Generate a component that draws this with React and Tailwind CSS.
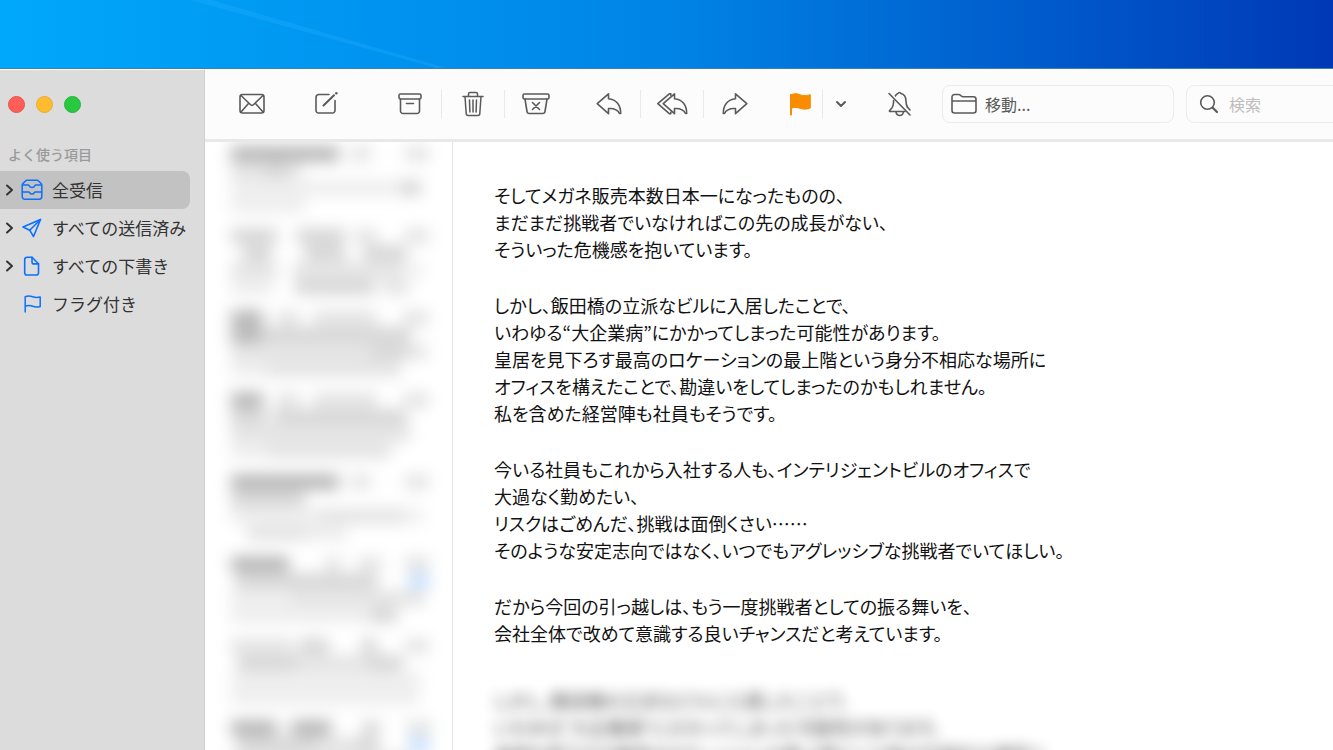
const FAVORITES = [
  { label: '全受信', icon: InboxIcon, expandable: true, active: true },
  { label: 'すべての送信済み', icon: SentIcon, expandable: true },
  { label: 'すべての下書き', icon: DraftIcon, expandable: true },
  { label: 'フラグ付き', icon: FlagOutlineIcon },
];

const PARAGRAPHS = [
  [
    'そしてメガネ販売本数日本一になったものの、',
    'まだまだ挑戦者でいなければこの先の成長がない、',
    'そういった危機感を抱いています。',
  ],
  [
    'しかし、飯田橋の立派なビルに入居したことで、',
    'いわゆる“大企業病”にかかってしまった可能性があります。',
    '皇居を見下ろす最高のロケーションの最上階という身分不相応な場所に',
    'オフィスを構えたことで、勘違いをしてしまったのかもしれません。',
    '私を含めた経営陣も社員もそうです。',
  ],
  [
    '今いる社員もこれから入社する人も、インテリジェントビルのオフィスで',
    '大過なく勤めたい、',
    'リスクはごめんだ、挑戦は面倒くさい……',
    'そのような安定志向ではなく、いつでもアグレッシブな挑戦者でいてほしい。',
  ],
  [
    'だから今回の引っ越しは、もう一度挑戦者としての振る舞いを、',
    '会社全体で改めて意識する良いチャンスだと考えています。',
  ],
];

const TONES = {
  none: 'bg-transparent',
  faint: 'bg-black/8',
  light: 'bg-black/12',
  mid: 'bg-black/18',
  dark: 'bg-black/32',
  blue: 'bg-blue-200',
};

// each message is four lines, each line a run of [tone, width]
const MESSAGES = [
  [
    [['dark', 108], ['none', 12], ['light', 20], ['none', 34], ['light', 24]],
    [['light', 34], ['mid', 22], ['light', 14]],
    [['faint', 164], ['none', 4], ['mid', 22]],
    [['faint', 74]],
  ],
  [
    [['mid', 46], ['none', 20], ['mid', 48], ['none', 10], ['light', 22], ['none', 28], ['light', 24]],
    [['none', 12], ['mid', 28], ['none', 34], ['mid', 40], ['none', 18], ['mid', 44]],
    [['light', 46], ['none', 16], ['light', 112], ['none', 6], ['faint', 12]],
    [['faint', 42], ['none', 22], ['mid', 80], ['none', 8], ['light', 26]],
  ],
  [
    [['dark', 32], ['none', 14], ['light', 22], ['none', 14], ['light', 64], ['none', 26], ['light', 26]],
    [['dark', 30], ['mid', 150]],
    [['light', 140], ['mid', 38], ['none', 2], ['light', 16]],
    [['faint', 36], ['light', 134]],
  ],
  [
    [['dark', 32], ['none', 14], ['light', 22], ['none', 14], ['light', 64], ['none', 26], ['light', 26]],
    [['mid', 36], ['none', 6], ['mid', 134]],
    [['light', 30], ['light', 150]],
    [['faint', 36], ['light', 124]],
  ],
  [
    [['dark', 108], ['none', 12], ['light', 20], ['none', 34], ['light', 24]],
    [['mid', 74]],
    [['faint', 90], ['light', 86], ['none', 4], ['faint', 12]],
    [['none', 16], ['light', 60], ['faint', 40]],
  ],
  [
    [['dark', 58], ['none', 36], ['light', 16], ['none', 18], ['light', 22], ['none', 24], ['light', 24]],
    [['none', 4], ['mid', 142], ['none', 32], ['blue', 20]],
    [['faint', 60], ['light', 134]],
    [['faint', 140], ['mid', 26]],
  ],
  [
    [['light', 62], ['none', 6], ['mid', 30], ['none', 32], ['mid', 16], ['none', 28], ['light', 24]],
    [['none', 6], ['mid', 60], ['light', 70], ['mid', 36]],
    [['faint', 190]],
    [['faint', 188]],
  ],
  [
    [['dark', 46], ['none', 14], ['dark', 40], ['none', 32], ['mid', 16], ['none', 28], ['light', 24]],
    [['none', 6], ['mid', 80], ['light', 40], ['mid', 22], ['none', 30], ['blue', 20]],
    [['light', 180]],
    [['faint', 150]],
  ],
];

function Icon({ w, h, sw = 1.6, className = '', children }) {
  return (
    <svg
      width={w}
      height={h}
      viewBox={`0 0 ${w} ${h}`}
      fill="none"
      stroke="currentColor"
      strokeWidth={sw}
      strokeLinecap="round"
      strokeLinejoin="round"
      className={`shrink-0 ${className}`}
      aria-hidden="true"
    >
      {children}
    </svg>
  );
}

function InboxIcon() {
  return (
    <Icon w={22} h={22} sw={1.5}>
      <path d="M1.200 6.300q0-1 .7-1.700L4.700 1.700q.5-.5 1.300-.5h10q.8 0 1.300.5l2.800 2.900q.7.7.7 1.700v11.200a2.700 2.700 0 0 1-2.700 2.700H3.900a2.700 2.700 0 0 1-2.700-2.700z" />
      <path d="M1.500 6h5.700c.5 0 .8.3 1 .7a3 3 0 0 0 5.600 0c.2-.4.5-.7 1-.7h5.700" />
      <path d="M1.500 13h6.200c.4 0 .7.200.9.600a2.700 2.700 0 0 0 4.800 0c.2-.4.500-.6.900-.6h6.200" />
    </Icon>
  );
}

function SentIcon() {
  return (
    <Icon w={22} h={22}>
      <path d="M19.500 2.500 2 10l6.700 3.200L12.500 19.500z" />
      <path d="M19.500 2.500 8.700 13.200" />
    </Icon>
  );
}

function DraftIcon() {
  return (
    <Icon w={22} h={22}>
      <path d="M6 2.200h5l6.500 6.500v9a2.300 2.300 0 0 1-2.300 2.300H6a2.300 2.300 0 0 1-2.300-2.300V4.500A2.300 2.300 0 0 1 6 2.200z" />
      <path d="M11 2.200v4.700a2 2 0 0 0 2 2h4.500" />
    </Icon>
  );
}

function FlagOutlineIcon() {
  return (
    <Icon w={22} h={22} sw={1.5}>
      <path d="M4.200 19V3.700C6.500 2.500 9 2.700 11.700 3.700s4.500 1 7.500.3v9.500c-3 1-5 .7-7.500-.2s-5-1-7.500 0" />
    </Icon>
  );
}

function MailIcon() {
  return (
    <Icon w={26} h={22}>
      <rect x="1" y="1.500" width="24" height="18.500" rx="2.500" />
      <path d="M2 2.500l9.300 9q1.700 1.600 3.400 0L24 2.500M2 19l7.500-8.500M24 19l-7.500-8.500" />
    </Icon>
  );
}

function ComposeIcon() {
  return (
    <Icon w={24} h={24}>
      <path d="M15 2.500H5a3 3 0 0 0-3 3v13A2.500 2.500 0 0 0 4.500 21h14a2.500 2.500 0 0 0 2.500-2.500V8.500" />
      <path d="M9.500 13.500 20 3.200" strokeWidth="2" />
      <path d="M22.300 1.300h.1" strokeWidth="2.400" />
    </Icon>
  );
}

function ArchiveIcon() {
  return (
    <Icon w={24} h={24}>
      <rect x="1" y="2" width="22" height="5" rx="1.500" />
      <path d="M2.500 7v12a2.500 2.500 0 0 0 2.500 2.500h14a2.500 2.500 0 0 0 2.500-2.500V7M8.500 11.500h7" />
    </Icon>
  );
}

function TrashIcon() {
  return (
    <Icon w={24} h={26} sw={1.5}>
      <path d="M2 5.500h20M7.500 5.500V3a1.500 1.500 0 0 1 1.500-1.500h6A1.500 1.500 0 0 1 16.500 3v2.500M4 5.500l1.200 17a2 2 0 0 0 2 2h9.600a2 2 0 0 0 2-2l1.200-17M8.500 9l.4 12M12 9v12M15.500 9l-.4 12" />
    </Icon>
  );
}

function JunkIcon() {
  return (
    <Icon w={28} h={24}>
      <rect x="1" y="2" width="26" height="5" rx="1.500" />
      <path d="m3 7 2 12.500a2.300 2.300 0 0 0 2.300 2h13.400a2.300 2.300 0 0 0 2.300-2L25 7M10.500 10.500l7 7M17.500 10.500l-7 7" />
    </Icon>
  );
}

const ARROW = 'M12.500 1.800 1.200 11.700l11.300 10V16.500c5.500-.4 9 .8 11 5h1.200C24.700 13.500 20.500 7.300 12.500 6.700z';

function ReplyIcon() {
  return (
    <Icon w={26} h={24}>
      <path d={ARROW} />
    </Icon>
  );
}

function ReplyAllIcon() {
  return (
    <Icon w={32} h={24}>
      <g transform="translate(6 0)">
        <path d={ARROW} />
      </g>
      <path d="M14.800 3.200V1.800h-1.500L1.800 11.700l11.500 10h1.500v-1.400" />
    </Icon>
  );
}

function ForwardIcon() {
  return (
    <Icon w={26} h={24}>
      <g transform="translate(26 0) scale(-1 1)">
        <path d={ARROW} />
      </g>
    </Icon>
  );
}

function FlagIcon() {
  return (
    <Icon w={24} h={24} className="text-[#f98c00]">
      <path d="M3 22.500V3" strokeWidth="2" />
      <path d="M3 2.700c4-1.700 6.500-1 9 0s5 1.500 10.300 0v13.300c-4.300 1.700-7.300 1.300-10.300.3s-5.500-1.400-9 0z" fill="currentColor" strokeWidth="1" />
    </Icon>
  );
}

function BellOffIcon() {
  return (
    <Icon w={26} h={26}>
      <path d="M9.200 5.200C10 3.500 11 2.700 12 2.500a1.600 1.600 0 0 1 3 0c3 .7 4.800 3.500 4.900 7 .1 3 .5 5 1.600 6.700" />
      <path d="M7.600 9.500c0 4-.6 6-1.800 7.500L3.500 19.700V20.500H19" />
      <path d="M10 20.800a3.700 3.700 0 0 0 7.400 0" />
      <path d="M3 2.500 24 24" />
      <path d="M5 2 25 22.500" stroke="#fcfcfc" strokeWidth="1" />
      <path d="M21.500 16.200 24 19" />
    </Icon>
  );
}

function FolderIcon() {
  return (
    <Icon w={26} h={22}>
      <path d="M1 17.500V4a2.500 2.500 0 0 1 2.500-2.500h4c.8 0 1.500.3 2 .8l.8.7c.5.5 1 .7 1.700.7h10.500A2.500 2.500 0 0 1 25 6.200v11.300a2.500 2.500 0 0 1-2.500 2.500h-19A2.500 2.500 0 0 1 1 17.500zM1 8h24" />
    </Icon>
  );
}

function SearchIcon() {
  return (
    <Icon w={20} h={20}>
      <circle cx="8.500" cy="8.500" r="6.800" />
      <path d="M13.700 13.700 18 18" strokeWidth="2.200" />
    </Icon>
  );
}

function ToolButton({ label, className = 'w-8', children }) {
  return (
    <button
      type="button"
      aria-label={label}
      className={`flex h-8 shrink-0 items-center justify-center ${className}`}
    >
      {children}
    </button>
  );
}

function Divider() {
  return <span className="h-7 w-px shrink-0 bg-[#e9e9e9]" />;
}

function Sidebar() {
  return (
    <aside className="w-[205px] shrink-0 border-t border-r border-t-white border-r-[#d0d0d0] bg-[#dcdcdc]">
      <div className="flex gap-[11px] pt-[26px] pl-2">
        <button type="button" aria-label="閉じる" className="size-[17px] rounded-full border border-[#e8524a] bg-[#ff5f57]" />
        <button type="button" aria-label="しまう" className="size-[17px] rounded-full border border-[#e9ab2e] bg-[#febc2e]" />
        <button type="button" aria-label="拡大" className="size-[17px] rounded-full border border-[#27b53a] bg-[#28c840]" />
      </div>
      <h2 className="mt-[31px] pl-2 text-[14px] leading-5 font-medium text-[#9a9a9a]">よく使う項目</h2>
      <nav className="mt-[7px] mr-[14px]">
        {FAVORITES.map(({ label, icon: ItemIcon, expandable, active }) => (
          <a
            key={label}
            href="#"
            className={`flex h-[38px] items-center rounded-r-lg pl-[5px] whitespace-nowrap text-[#333] ${active ? 'bg-[#c2c2c2]' : ''}`}
          >
            <span className="w-4 shrink-0">
              {expandable && (
                <Icon w={9} h={12} sw={2}>
                  <path d="M2 1.500 7 6l-5 4.500" />
                </Icon>
              )}
            </span>
            <span className="text-[#0a70ff]">
              <ItemIcon />
            </span>
            <span className="ml-[9px] text-[17px]">{label}</span>
          </a>
        ))}
      </nav>
    </aside>
  );
}

function Toolbar() {
  return (
    <header className="flex h-[73px] shrink-0 items-center border-b-3 border-[#e8e8e8] bg-[#fcfcfc] pl-[31px] text-[#5a5a5a]">
      <ToolButton label="受信"><MailIcon /></ToolButton>
      <ToolButton label="新規メッセージ" className="ml-[42px] w-8"><ComposeIcon /></ToolButton>

      <div className="ml-[37px] flex items-center">
        <ToolButton label="アーカイブ" className="w-[62px]"><ArchiveIcon /></ToolButton>
        <Divider />
        <ToolButton label="削除" className="w-[62px]"><TrashIcon /></ToolButton>
        <Divider />
        <ToolButton label="迷惑メール" className="w-[62px]"><JunkIcon /></ToolButton>
      </div>

      <div className="ml-[11px] flex items-center">
        <ToolButton label="返信" className="w-[62px]"><ReplyIcon /></ToolButton>
        <Divider />
        <ToolButton label="全員に返信" className="w-[62px]"><ReplyAllIcon /></ToolButton>
        <Divider />
        <ToolButton label="転送" className="w-[62px]"><ForwardIcon /></ToolButton>
      </div>

      <div className="ml-3 flex items-center">
        <ToolButton label="フラグ" className="w-[44px]"><FlagIcon /></ToolButton>
        <Divider />
        <ToolButton label="フラグの色" className="w-[36px]">
          <Icon w={12} h={8} sw={2}>
            <path d="m2 2 4 4 4-4" />
          </Icon>
        </ToolButton>
      </div>

      <ToolButton label="通知を停止" className="ml-6 w-8"><BellOffIcon /></ToolButton>

      <button
        type="button"
        className="ml-[27px] flex h-[38px] w-[232px] shrink-0 items-center gap-2 rounded-lg border border-[#ececec] pl-2 text-[16px] leading-5"
      >
        <FolderIcon />
        移動...
      </button>

      <label className="-mr-4 ml-3 flex h-[38px] min-w-40 flex-1 items-center gap-[10px] rounded-lg border border-[#ececec] pl-3">
        <SearchIcon />
        <input
          type="search"
          aria-label="検索"
          placeholder="検索"
          className="w-full min-w-0 bg-transparent text-[16px] outline-none placeholder:text-[#bdbdbd]"
        />
      </label>
    </header>
  );
}

function MessageList() {
  return (
    <section className="w-[248px] shrink-0 overflow-hidden border-r border-[#e6e6e6] pt-[3px] pl-[26px]">
      <ul className="blur-[8px]">
        {MESSAGES.map((lines, i) => (
          <li key={i} className="h-[82px]">
            {lines.map((runs, j) => (
              <div key={j} className="flex h-[17px] items-center">
                {runs.map(([tone, width], k) => (
                  <span key={k} className={`h-[14px] shrink-0 ${TONES[tone]}`} style={{ width }} />
                ))}
              </div>
            ))}
          </li>
        ))}
      </ul>
    </section>
  );
}

function Lines({ lines }) {
  return lines.map((line) => (
    <span key={line} className="block">{line}</span>
  ));
}

function Message() {
  return (
    <article className="min-w-0 flex-1 overflow-hidden pt-[40px] pl-[41px] text-[18px] leading-[27px] whitespace-nowrap text-[#111] [font-feature-settings:'palt']">
      <div className="space-y-[29px]">
        {PARAGRAPHS.map((lines) => (
          <p key={lines[0]}>
            <Lines lines={lines} />
          </p>
        ))}
      </div>
      <p className="mt-[40px] opacity-80 blur-[7px] select-none">
        <Lines lines={PARAGRAPHS[1]} />
      </p>
    </article>
  );
}

export default function App() {
  return (
    <div className="flex h-screen flex-col overflow-hidden bg-white font-['Noto_Sans_CJK_JP',sans-serif]">
      <div className="relative h-[69px] shrink-0 overflow-hidden border-b border-[#3f7fae] bg-linear-to-r from-[#00a8fb] via-[#0084e6] via-50% to-[#0038b6]">
        {/* light beam across the wallpaper */}
        <svg className="absolute top-0 left-0" width="480" height="69" aria-hidden="true">
          <path d="M190 0h22l238 69h-10z" fill="#2bb4ff" opacity="0.25" />
        </svg>
      </div>
      <div className="flex min-h-0 flex-1">
        <Sidebar />
        <div className="flex min-w-0 flex-1 flex-col">
          <Toolbar />
          <div className="flex min-h-0 flex-1">
            <MessageList />
            <Message />
          </div>
        </div>
      </div>
    </div>
  );
}
